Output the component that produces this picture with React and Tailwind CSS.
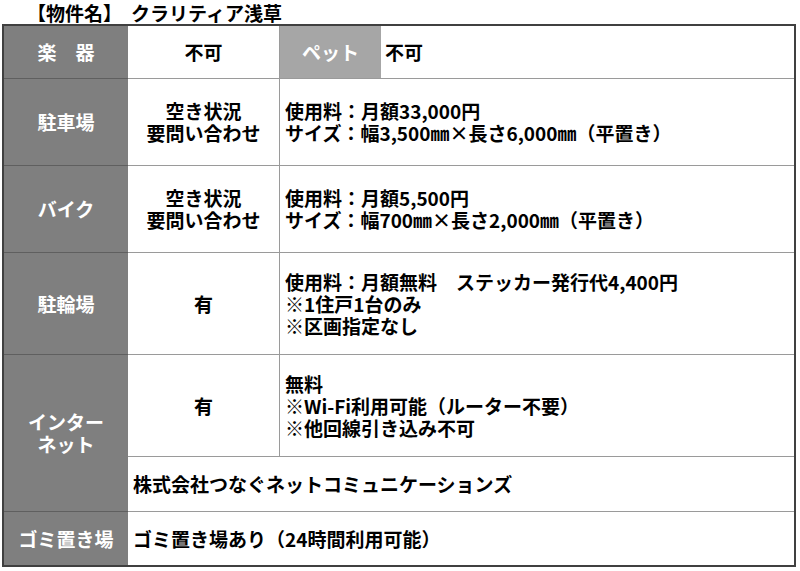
const font = { fontFamily: '"Noto Sans CJK JP", "Noto Sans", sans-serif' };

const Label = ({ children, className = "" }) => (
  <div
    className={`flex items-center justify-center text-center bg-[#7f7f7f] text-white border-b border-[#5f5f5f] ${className}`}
  >
    <div className="leading-[22px]">{children}</div>
  </div>
);

const Cell = ({ children, className = "" }) => (
  <div className={`flex items-center border-b border-[#9a9a9a] ${className}`}>
    <div className="leading-[22px]">{children}</div>
  </div>
);

const App = () => {
  return (
    <div className="w-[800px] h-[571px] bg-white text-black font-bold text-[19px]" style={font}>
      <div className="h-[24px] pl-[27px] leading-[26px] whitespace-pre flex">
        <span>【物件名】</span>
        <span className="ml-[9px]">クラリティア浅草</span>
      </div>

      <div className="ml-[2px] w-[794px] border-2 border-[#404040]">
        <div className="grid grid-cols-[124px_152px_101px_1fr] grid-rows-[53px_87px_87px_102px_102px_55px_53px]">
          {/* 楽器 / ペット */}
          <Label className="whitespace-pre">楽　器</Label>
          <Cell className="justify-center border-r border-[#5f5f5f]">不可</Cell>
          <Label className="bg-[#a6a6a6] border-b-[#9a9a9a]">ペット</Label>
          <Cell className="pl-[4px]">不可</Cell>

          {/* 駐車場 */}
          <Label>駐車場</Label>
          <Cell className="justify-center text-center border-r border-[#5f5f5f]">
            空き状況
            <br />
            要問い合わせ
          </Cell>
          <Cell className="col-span-2 pl-[5px] whitespace-pre">
            使用料：月額33,000円
            <br />
            サイズ：幅3,500㎜×長さ6,000㎜（平置き）
          </Cell>

          {/* バイク */}
          <Label>バイク</Label>
          <Cell className="justify-center text-center border-r border-[#5f5f5f]">
            空き状況
            <br />
            要問い合わせ
          </Cell>
          <Cell className="col-span-2 pl-[5px] whitespace-pre">
            使用料：月額5,500円
            <br />
            サイズ：幅700㎜×長さ2,000㎜（平置き）
          </Cell>

          {/* 駐輪場 */}
          <Label>駐輪場</Label>
          <Cell className="justify-center border-r border-[#5f5f5f]">有</Cell>
          <Cell className="col-span-2 pl-[5px] whitespace-pre">
            使用料：月額無料　ステッカー発行代4,400円
            <br />
            ※1住戸1台のみ
            <br />
            ※区画指定なし
          </Cell>

          {/* インターネット */}
          <Label className="row-span-2">
            インター
            <br />
            ネット
          </Label>
          <Cell className="justify-center border-r border-[#5f5f5f]">有</Cell>
          <Cell className="col-span-2 pl-[5px] whitespace-pre">
            無料
            <br />
            ※Wi-Fi利用可能（ルーター不要）
            <br />
            ※他回線引き込み不可
          </Cell>
          <Cell className="col-span-3 pl-[5px]">株式会社つなぐネットコミュニケーションズ</Cell>

          {/* ゴミ置き場 */}
          <Label className="border-b-0">ゴミ置き場</Label>
          <Cell className="col-span-3 pl-[5px] border-b-0">ゴミ置き場あり（24時間利用可能）</Cell>
        </div>
      </div>
    </div>
  );
};

export default App;
